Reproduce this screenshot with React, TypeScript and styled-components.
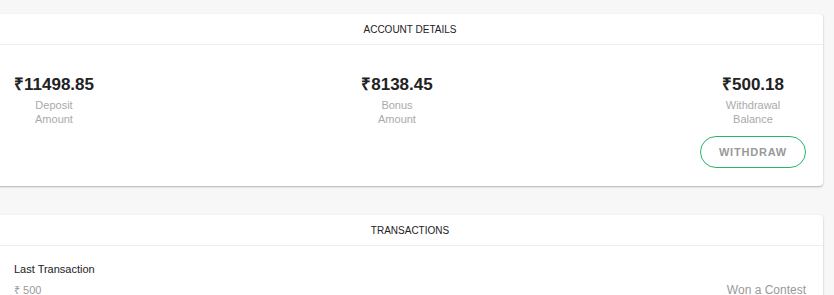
import styled, { createGlobalStyle } from "styled-components";

const GlobalStyle = createGlobalStyle`
  body {
    margin: 0;
    background: #f7f7f7;
    font-family: "Liberation Sans", Arial, sans-serif;
  }
`;

const balances = [
  { value: "₹11498.85", label: ["Deposit", "Amount"] },
  { value: "₹8138.45", label: ["Bonus", "Amount"] },
  { value: "₹500.18", label: ["Withdrawal", "Balance"], withdraw: true },
];

export default function App() {
  return (
    <>
      <GlobalStyle />
      <Page>
        <Card>
          <CardHeader>Account Details</CardHeader>
          <Balances>
            {balances.map((b) => (
              <Balance key={b.value}>
                <Value>{b.value}</Value>
                <Label>
                  {b.label.map((l) => (
                    <div key={l}>{l}</div>
                  ))}
                </Label>
                {b.withdraw && <WithdrawButton>Withdraw</WithdrawButton>}
              </Balance>
            ))}
          </Balances>
        </Card>
        <Card>
          <CardHeader>Transactions</CardHeader>
          <TxBody>
            <TxTitle>Last Transaction</TxTitle>
            <TxRow>
              <TxAmount>₹ 500</TxAmount>
              <span>Won a Contest</span>
            </TxRow>
          </TxBody>
        </Card>
      </Page>
    </>
  );
}

const Page = styled.div`
  display: flex;
  flex-direction: column;
  gap: 29px;
  padding: 14px 11px 0 0;
  margin-left: -3px;
`;

const Card = styled.div`
  background: #fff;
  border-radius: 4px;
  box-shadow: 0 1px 2px rgba(0, 0, 0, 0.28), 0 0 1px rgba(0, 0, 0, 0.06);
`;

const CardHeader = styled.div`
  height: 30px;
  display: flex;
  align-items: center;
  justify-content: center;
  border-bottom: 1px solid #eeeeee;
  font-size: 10px;
  text-transform: uppercase;
  color: #222;
`;

const Balances = styled.div`
  display: flex;
  justify-content: space-between;
  align-items: flex-start;
  padding: 29px 17px 18px;
`;

const Balance = styled.div`
  display: flex;
  flex-direction: column;
  align-items: center;
`;

const Value = styled.div`
  font-size: 17px;
  line-height: 22px;
  font-weight: 700;
  color: #222;
`;

const Label = styled.div`
  margin-top: 2px;
  font-size: 11px;
  line-height: 14px;
  color: #aaa;
  text-align: center;
`;

const WithdrawButton = styled.button`
  margin-top: 10px;
  width: 106px;
  height: 32px;
  border: 1px solid #2bb46a;
  border-radius: 16px;
  background: #fff;
  font-family: "Liberation Sans", Arial, sans-serif;
  font-size: 11px;
  font-weight: 700;
  letter-spacing: 0.8px;
  text-transform: uppercase;
  color: #999;
`;

const TxBody = styled.div`
  padding: 15px 17px 0;
`;

const TxTitle = styled.div`
  font-size: 11px;
  line-height: 16px;
  color: #222;
`;

const TxRow = styled.div`
  display: flex;
  justify-content: space-between;
  margin-top: 5px;
  font-size: 12px;
  line-height: 16px;
  color: #999;
`;

const TxAmount = styled.span`
  font-size: 11px;
`;
